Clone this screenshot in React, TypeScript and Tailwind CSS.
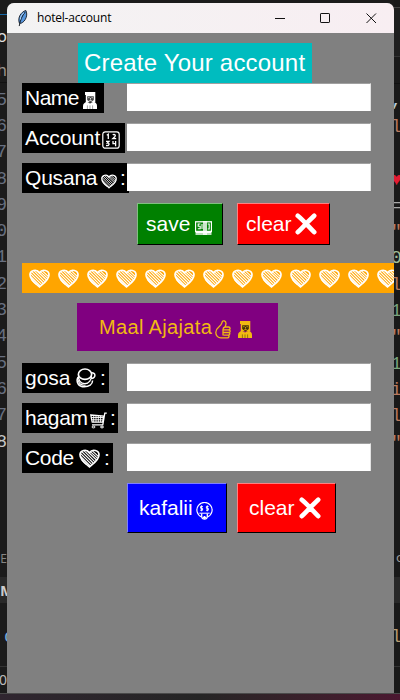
import React from "react";

type IconProps = { className?: string };

const StripedHeart = ({ className }: IconProps) => (
  <svg viewBox="0 0 21 19" className={className} fill="none" stroke="currentColor">
    <path
      d="M10.5 17.8 C7.5 15 1 11.5 1 5.8 C1 1.5 7.5 -.8 10.5 3.8 C13.5 -.8 20 1.5 20 5.8 C20 11.5 13.5 15 10.5 17.8 Z"
      strokeWidth="1.7"
    />
    <path
      d="M7.5 1.5 L17.6 11 M4.9 1.7 L15.8 12.6 M2.8 2.6 L14.2 14 M1.5 4.3 L12.8 15.6 M1.2 7 L11.2 17 M2.8 11 L7.5 15.5 M11 2.4 L18.7 9.4 M13.2 1.7 L19.8 7.8"
      strokeWidth="1.15"
    />
  </svg>
);

const Graduate = ({ className }: IconProps) => (
  <svg viewBox="0 0 14 17" className={className} fill="none" stroke="currentColor">
    <path d="M2 0 H12.3 V10.2 H2.8 V3 H2 Z" fill="currentColor" stroke="none" />
    <path d="M4.2 4.2 H10.8 V8 L7.5 10.4 L4.2 8 Z" fill="#000b" stroke="none" />
    <path d="M5.2 5.7 H6.5 M8.5 5.7 H9.8 M7.5 6 V7.6 M6.3 8.6 H8.7" strokeWidth=".8" />
    <path d="M0 17 V14 C0 11.5 2 10.5 4 9.8 L7 11.6 L10.5 9.8 C12.5 10.5 14 11.5 14 14 V17 Z" fill="currentColor" stroke="none" />
    <path d="M4.4 13.4 V17 M7 13.4 V17 M9.6 13.4 V17" stroke="#0007" strokeWidth=".8" />
  </svg>
);

const Numbers = ({ className }: IconProps) => (
  <svg viewBox="0 0 18 18" className={className} fill="none" stroke="currentColor">
    <rect x=".8" y=".8" width="16.4" height="16.4" rx="2.5" strokeWidth="1.2" />
    <path
      d="M4.8 4.2 L6.3 3.2 V8 M10.8 4 C12 2.5 14 4 13 5.5 L10.8 7.7 H14.2 M4 10.3 H7 L5.4 12 C8 11.8 7.5 15.3 4 14.5 M11 10 V12.6 H14 M13.6 10 V15.3"
      strokeWidth="1.3"
    />
  </svg>
);

const Money = ({ className }: IconProps) => (
  <svg viewBox="0 0 17 14" className={className} fill="none" stroke="currentColor">
    <rect x=".5" y=".8" width="16" height="9.6" strokeWidth="1.3" />
    <path d="M.5 11.6 H16.5 M.5 13.2 H16.5" strokeWidth="1.3" />
    <path d="M9 0 V14 M11 0 V14" strokeWidth="1.6" />
    <path d="M5.4 3 H3.2 V5.2 H5.2 V7.7 H2.8 M7 3 V8 M12.7 3 H14.2 V8 H12.7" strokeWidth="1.1" />
  </svg>
);

const Cross = ({ className }: IconProps) => (
  <svg viewBox="0 0 22 22" className={className} fill="none" stroke="currentColor" strokeLinecap="round">
    <path d="M2.8 2.8 C8 7 14 14 19.2 19.2 M19.2 2.8 C14 7.6 8 14 2.8 19.2" strokeWidth="4.6" />
  </svg>
);

const ThumbUp = ({ className }: IconProps) => (
  <svg viewBox="0 0 16 19" className={className} fill="none" stroke="currentColor" strokeWidth="1.3" strokeLinejoin="round">
    <path d="M.8 12.5 C.8 10 2.3 8.2 4 6.8 C5.6 5.4 6.6 4.2 7 2.6 C7.2 1 8.3 .6 9.4 .9 C11.6 1.6 11.2 4.6 10 7 H13.6 C15.5 7 15.5 9.7 13.8 9.8 C15.7 10 15.5 12.4 13.8 12.5 C15.3 12.9 15 15 13.4 15.1 C14.5 15.7 14 17.9 12.5 17.9 H6 C3 17.9 .8 15.5 .8 12.5 Z" />
    <path d="M8.6 9.8 H13.8 M8.6 12.5 H13.8 M8.6 15.1 H13.4 M10 7 C8.6 7.3 8 8.3 8 9.5 V15.5" />
  </svg>
);

const Coffee = ({ className }: IconProps) => (
  <svg viewBox="0 0 20 20" className={className} fill="none" stroke="currentColor">
    <ellipse cx="9" cy="6.2" rx="6.6" ry="5.2" strokeWidth="1.6" />
    <path d="M2.4 6.5 C2 12.5 4.6 15.6 8.8 15.6 C13 15.6 15.8 12 15.6 6.5" strokeWidth="1.3" />
    <path d="M15 4.8 C20.2 4.2 20.2 9.8 15 10.6" strokeWidth="1.5" />
    <path d="M2 9 C-.6 14.5 3 18.8 8.2 18.8 C13 18.8 16.6 16.4 16.6 12.6" strokeWidth="1.5" />
    <path d="M2.2 12.2 C3 16.2 6 17.5 9.5 17.2" strokeWidth="1.2" />
  </svg>
);

const Cart = ({ className }: IconProps) => (
  <svg viewBox="0 0 17 17" className={className} fill="none" stroke="currentColor">
    <path d="M.8 3 L13.6 4 L12.6 10.2 H2.2 Z M16.8 1.2 H14.8 L12.8 12.8 H2" strokeWidth="1.3" />
    <path d="M3.7 3.4 V10.2 M6 3.6 V10.2 M8.3 3.6 V10.2 M10.6 3.8 V10.2 M1.2 5.5 H13 M1.6 7.8 H12.8" strokeWidth=".9" />
    <ellipse cx="3.5" cy="15" rx="1.5" ry=".9" strokeWidth="1" />
    <ellipse cx="12" cy="15" rx="1.5" ry=".9" strokeWidth="1" />
  </svg>
);

const MoneyFace = ({ className }: IconProps) => (
  <svg viewBox="0 0 17 18" className={className} fill="none" stroke="currentColor">
    <path d="M5.5 15 A7.6 7.6 0 1 1 11.5 15" strokeWidth="1.2" />
    <path d="M6.8 4.5 H4.6 V6.3 H6.6 V8.2 H4.2 M5.6 3.4 V9.3 M12.5 4.5 H10.4 V6.3 H12.3 V8.2 H10 M11.3 3.4 V9.3 M3.4 11.2 H13.6" strokeWidth="1" />
    <path d="M5.7 11.5 V14.8 C6 17.8 11 17.8 11.3 14.8 V11.5" strokeWidth="1.3" />
    <path d="M8.5 14 V17 M7 15.4 H10" strokeWidth="1.4" />
  </svg>
);

const Feather = () => (
  <svg viewBox="0 0 12 18" className="h-[17px] w-[12px]">
    <path d="M2.2 14 C0 8 4 2 9 .5 C11.4 5 9 12 4 14 Z" fill="#5796dc" stroke="#18212d" strokeWidth="1" />
    <path d="M8.5 2 C5 6 3 11 2 17" fill="none" stroke="#101820" strokeWidth="1" />
    <path d="M7 3 C4 5 3 8 3.3 10" fill="none" stroke="#b9d9fa" strokeWidth="1" />
  </svg>
);

const Row = ({ children }: { children: React.ReactNode }) => (
  <div className="flex h-[30px] items-start">
    <div className="w-[105px] shrink-0">{children}</div>
    <div className="h-7 w-[244px] shrink-0 border-t border-r border-t-[#a0a0a0] border-r-[#e3e3e3] bg-white" />
  </div>
);

const Label = ({ className, children }: { className: string; children: React.ReactNode }) => (
  <div className={`flex h-[30px] items-center bg-black pl-[3px] leading-[30px] text-white *:shrink-0 ${className}`}>{children}</div>
);

const Button = ({ className, children }: { className: string; children: React.ReactNode }) => (
  <button
    className={`flex items-center border-t border-l border-r border-b border-t-white/50 border-l-white/50 border-r-black border-b-black text-white ${className}`}
  >
    {children}
  </button>
);

const lineNumbers = ["5", "6", "7", "8", "9", "0", "1", "2", "3", "4", "5", "6", "7", "8"];

const codeTails = [
  { t: ",", c: "text-[#b8cbd8]" },
  { t: "l", c: "text-[#b9795e]" },
  { t: "", c: "" },
  { t: "♥", c: "text-[#e31b32]" },
  { t: "=", c: "text-[#aaaaaa]" },
  { t: '"', c: "text-[#b9795e]" },
  { t: "0", c: "text-[#a2bd96]" },
  { t: "l", c: "text-[#b9795e]" },
  { t: "1", c: "text-[#79a47d]" },
  { t: '"', c: "text-[#b9795e]" },
  { t: "1", c: "text-[#79a47d]" },
  { t: "i", c: "text-[#b9795e]" },
  { t: "l", c: "text-[#b9795e]" },
  { t: '"', c: "text-[#b9795e]" },
];

const Editor = () => (
  <div className="flex h-full justify-between bg-[#1b1b1b] font-['Liberation_Mono',monospace] text-[18px]">
    <div className="flex w-[7px] flex-col overflow-hidden whitespace-nowrap">
      <div className="h-[15px] border-b border-[#1769a8]" />
      <div className="flex h-[42px] items-center justify-end font-['Noto_Sans',sans-serif] text-[16px] text-[#e0e0e0]">o</div>
      <div className="flex h-[26px] items-center justify-end border-b border-[#111] font-['Noto_Sans',sans-serif] text-[16px] text-[#99938d]">h</div>
      <div className="mt-[4px] text-[#687080]">
        {lineNumbers.map((n, i) => (
          <div key={i} className={`flex h-[26.3px] items-center justify-end ${i === 13 ? "text-[#c6c6c6]" : ""}`}>
            {n}
          </div>
        ))}
      </div>
      <div className="mt-[92px] flex h-[23px] items-center justify-end font-['Noto_Sans',sans-serif] text-[12px] text-[#858585]">DE</div>
      <div className="mt-[7px] flex h-[26px] items-center bg-[#292929] font-['Noto_Sans',sans-serif] text-[15px] font-bold text-[#cccccc]">M</div>
      <div className="mt-[18px] flex h-[32px] items-center pl-[4px] text-[#77a9d8]">c</div>
      <div className="mt-[13px] flex h-[25px] items-center justify-end border-t border-[#333] font-['Noto_Sans',sans-serif] text-[14px] text-[#bbbbbb]">0</div>
    </div>
    <div className="flex w-[6px] flex-col overflow-hidden whitespace-nowrap bg-[#191919]">
      <div className="h-[8px] border-b border-[#444]" />
      <div className="h-[49px] border-b border-[#333] bg-[#1f1f1f]" />
      <div className="mt-[26px] border-t border-[#101010] pt-[4px]">
        {codeTails.map((l, i) => (
          <div key={i} className={`-ml-[3px] flex h-[26.3px] items-center ${l.c}`}>
            {l.t}
          </div>
        ))}
      </div>
      <div className="mt-[90px] flex h-[23px] items-center pl-[2px] font-['Noto_Sans',sans-serif] text-[13px] text-[#999]">o</div>
      <div className="mt-[8px] h-[26px] bg-[#292929]" />
      <div className="mt-[18px] -ml-[3px] flex h-[32px] items-center text-[#b79b70]">l</div>
      <div className="mt-[13px] h-[24px] border-t border-[#333]" />
    </div>
  </div>
);

export default function App() {
  return (
    <div className="relative h-[700px] w-[400px] overflow-hidden bg-[#1b1b1b]">
      <Editor />
      <div className="absolute inset-x-0 bottom-0 h-[7px] border-t border-[#4a4a4a] bg-gradient-to-r from-[#302630] via-[#252525] to-[#4b1831]" />
      <div className="absolute top-[3px] left-[7px] flex h-[690px] w-[387px] flex-col overflow-hidden rounded-t-[7px] bg-[#808080] font-['Liberation_Sans',Arial,sans-serif] text-[21px]">
        <header className="flex h-[30px] shrink-0 items-center bg-gradient-to-r from-[#f3f3f3] to-[#f8eef2] pl-[10px] text-black">
          <Feather />
          <span className="ml-[8px] font-['Open_Sans',sans-serif] text-[12px] leading-[30px] tracking-[-0.2px]">hotel-account</span>
          <svg viewBox="0 0 102 12" className="mr-[17px] ml-auto h-[12px] w-[102px]" fill="none" stroke="#111" strokeWidth="1">
            <path d="M0 6.5 H10 M91.5 1.5 L101 11 M101 1.5 L91.5 11" />
            <rect x="45.5" y="1.5" width="9" height="9" rx=".6" />
          </svg>
        </header>

        <main className="flex flex-col pt-[10px] pl-[15px]">
          <h1 className="ml-[56px] h-[40px] w-[234px] bg-[#00bcbf] pl-[6px] text-[24px] leading-[40px] tracking-[0.2px] whitespace-nowrap text-white">
            Create Your account
          </h1>

          <section className="flex flex-col gap-[10px]">
            <Row>
              <Label className="w-[82px]">
                <span className="w-[58px] tracking-[-0.5px]">Name</span>
                <Graduate className="mt-[4px] h-[17px] w-[14px]" />
              </Label>
            </Row>
            <Row>
              <Label className="w-[103px]">
                <span className="w-[77px] tracking-[-0.1px]">Account</span>
                <Numbers className="mt-[4px] h-[18px] w-[18px]" />
              </Label>
            </Row>
            <Row>
              <Label className="w-[107px]">
                <span className="w-[76px] tracking-[-0.2px]">Qusana</span>
                <StripedHeart className="mt-[6px] h-[15px] w-[16px]" />
                <span className="ml-[3px]">:</span>
              </Label>
            </Row>
          </section>

          <div className="mt-[10px] ml-[115px] flex gap-[14px]">
            <Button className="h-[42px] w-[86px] bg-[#008000] pl-[8px]">
              <span className="w-[49px] text-left">save</span>
              <Money className="mt-[8px] h-[14px] w-[17px]" />
            </Button>
            <Button className="h-[42px] w-[93px] bg-[#ff0000] pl-[8px]">
              <span className="w-[49px] text-left">clear</span>
              <Cross className="h-[22px] w-[22px]" />
            </Button>
          </div>

          <div className="mt-[18px] flex h-[30px] items-center gap-[8px] overflow-hidden bg-[#ffa500] pl-[7px] text-white">
            {Array.from({ length: 13 }, (_, i) => (
              <StripedHeart key={i} className="mt-[1px] h-[19px] w-[21px] shrink-0" />
            ))}
          </div>

          <div className="mt-[10px] ml-[55px] flex h-[48px] w-[201px] items-center bg-[#800080] pl-[22px] text-[#f1b912]">
            <span className="w-[116px] text-[20px] tracking-[0.35px] whitespace-nowrap">Maal Ajajata</span>
            <ThumbUp className="mt-[5px] h-[19px] w-[16px]" />
            <Graduate className="mt-[5px] ml-[7px] h-[17px] w-[14px]" />
          </div>

          <section className="mt-[12px] flex flex-col gap-[10px]">
            <Row>
              <Label className="w-[87px]">
                <span className="w-[51px]">gosa</span>
                <Coffee className="h-[20px] w-[20px]" />
                <span className="ml-[4px]">:</span>
              </Label>
            </Row>
            <Row>
              <Label className="w-[96px]">
                <span className="w-[65px] tracking-[-0.3px]">hagam</span>
                <Cart className="mt-[5px] h-[17px] w-[17px]" />
                <span className="ml-[3px]">:</span>
              </Label>
            </Row>
            <Row>
              <Label className="w-[91px]">
                <span className="w-[54px] tracking-[-0.3px]">Code</span>
                <StripedHeart className="mt-[1px] h-[19px] w-[21px]" />
                <span className="ml-[4px]">:</span>
              </Label>
            </Row>
          </section>

          <div className="mt-[10px] ml-[105px] flex gap-[10px]">
            <Button className="h-[50px] w-[100px] bg-[#0000ff] pl-[11px]">
              <span className="w-[57px] text-left">kafalii</span>
              <MoneyFace className="mt-[5px] h-[18px] w-[17px]" />
            </Button>
            <Button className="h-[50px] w-[99px] bg-[#ff0000] pl-[11px]">
              <span className="w-[50px] text-left">clear</span>
              <Cross className="h-[22px] w-[22px]" />
            </Button>
          </div>
        </main>
      </div>
    </div>
  );
}
